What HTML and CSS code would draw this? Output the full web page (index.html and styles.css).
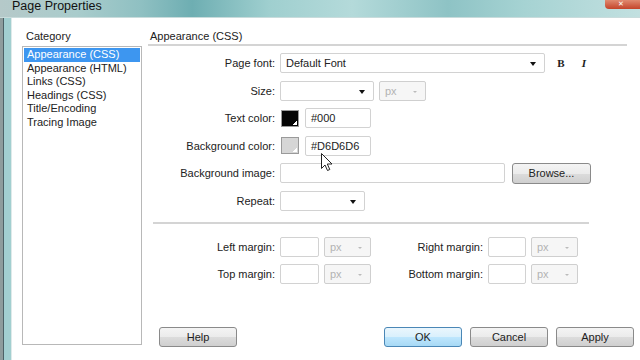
FILE: index.html
```html
<!DOCTYPE html>
<html lang="en">
<head>
    <meta charset="UTF-8">
    <title>Page Properties</title>
    <link rel="stylesheet" href="styles.css">
</head>
<body>

<div class="window">
    <div class="titlebar">
        <span class="title">Page Properties</span>
        <span class="close">&#x2715;</span>
    </div>

    <div class="frame">
        <div class="frame-left"></div>

        <div class="client">
            <!-- lista de categorias -->
            <div class="sidebar">
                <div class="caption">Category</div>
                <ul class="listbox">
                    <li class="selected">Appearance (CSS)</li>
                    <li>Appearance (HTML)</li>
                    <li>Links (CSS)</li>
                    <li>Headings (CSS)</li>
                    <li>Title/Encoding</li>
                    <li>Tracing Image</li>
                </ul>
            </div>

            <!-- panel derecho -->
            <div class="main">
                <div class="panel-title">Appearance (CSS)</div>

                <div class="form">
                    <div class="row">
                        <span class="label">Page font:</span>
                        <div class="select font-select">Default Font</div>
                        <span class="style-btn bold">B</span>
                        <span class="style-btn italic">I</span>
                    </div>
                    <div class="row">
                        <span class="label">Size:</span>
                        <div class="select size-select"></div>
                        <div class="select unit disabled">px</div>
                    </div>
                    <div class="row">
                        <span class="label">Text color:</span>
                        <span class="swatch swatch-black"></span>
                        <div class="field color-field">#000</div>
                    </div>
                    <div class="row">
                        <span class="label">Background color:</span>
                        <span class="swatch swatch-grey"></span>
                        <div class="field color-field">#D6D6D6</div>
                    </div>
                    <div class="row">
                        <span class="label">Background image:</span>
                        <div class="field image-field"></div>
                        <button class="btn browse">Browse...</button>
                    </div>
                    <div class="row">
                        <span class="label">Repeat:</span>
                        <div class="select repeat-select"></div>
                    </div>
                </div>

                <div class="separator"></div>

                <div class="margins">
                    <span class="label">Left margin:</span>
                    <div class="field"></div>
                    <div class="select unit disabled">px</div>
                    <span class="label">Right margin:</span>
                    <div class="field"></div>
                    <div class="select unit disabled">px</div>

                    <span class="label">Top margin:</span>
                    <div class="field"></div>
                    <div class="select unit disabled">px</div>
                    <span class="label">Bottom margin:</span>
                    <div class="field"></div>
                    <div class="select unit disabled">px</div>
                </div>

                <div class="buttons">
                    <button class="btn help">Help</button>
                    <button class="btn ok">OK</button>
                    <button class="btn">Cancel</button>
                    <button class="btn">Apply</button>
                </div>
            </div>
        </div>
    </div>
</div>

<svg class="cursor" width="12" height="19" viewBox="0 0 12 19">
    <path d="M0.5 0.5 L0.5 15.5 L4 12 L6.5 17.5 L8.8 16.5 L6.3 11 L11 11 Z" fill="#fff" stroke="#222" stroke-width="1"/>
</svg>

</body>
</html>
```

FILE: styles.css
```css
/* Estilos generales */
body {
    margin: 0;
    width: 640px;
    height: 360px;
    overflow: hidden;
    background-color: #fff;
    font-family: 'Liberation Sans', Arial, sans-serif;
    font-size: 11px;
    color: #222;
    position: relative;
}
.window {
    width: 640px;
    display: flex;
    flex-direction: column;
}
/* Barra de titulo */
.titlebar {
    height: 17px;
    border-bottom: 1px solid #c9dcdc;
    background: linear-gradient(90deg, #b5c9c9 0%, #a9cccc 12%, #8fc0c2 22%, #6eaeb2 30%, #9fcfcf 42%, #b4dada 55%, #8ec3c5 70%, #a6d3d3 82%, #c2e0e0 100%);
    display: flex;
    position: relative;
}
.title {
    display: block;
    margin-left: 12px;
    margin-top: 0;
    line-height: 12px;
    font-size: 12.5px;
    color: #111;
}
.close {
    position: absolute;
    left: 605px;
    top: 0;
    width: 35px;
    height: 9px;
    border-radius: 0 0 0 4px;
    background: linear-gradient(#e08a70, #c4442a);
    color: #fff;
    font-size: 7px;
    line-height: 8px;
    text-align: center;
    text-indent: -4px;
}
.frame {
    display: flex;
    height: 342px;
}
.frame-left {
    width: 12px;
    flex-shrink: 0;
    background: linear-gradient(90deg, #8e9c9c 0 3px, #4d6266 3px 4px, #a2cfd0 4px 11px, #dfeaea 11px 12px);
}
.client {
    flex: 1;
    display: flex;
    gap: 6px;
    padding-left: 10px;
}
/* Lista de categorias */
.sidebar {
    width: 120px;
    flex-shrink: 0;
}
.caption, .panel-title {
    padding-top: 11px;
    line-height: 14px;
    padding-left: 4px;
}
.listbox {
    list-style: none;
    margin: 3px 0 0 0;
    padding: 1px;
    height: 295px;
    border: 1px solid #b8b8b8;
}
.listbox li {
    line-height: 13.6px;
    padding-left: 3px;
}
.listbox .selected {
    background-color: #3d96f0;
    color: #fff;
}
/* Panel derecho */
.main {
    flex: 1;
}
.panel-title {
    padding-left: 2px;
    width: 477px;
    padding-bottom: 1px;
    border-bottom: 2px solid #d4d4d4;
}
.form {
    margin-top: 7px;
    display: flex;
    flex-direction: column;
    gap: 7.5px;
}
.row {
    display: flex;
    align-items: center;
    gap: 5px;
    height: 20px;
}
.label {
    width: 127px;
    text-align: right;
    flex-shrink: 0;
}
.select, .field {
    box-sizing: border-box;
    height: 20px;
    border: 1px solid #d2d2d2;
    border-radius: 2px;
    background-color: #fff;
    line-height: 18px;
    padding-left: 5px;
    position: relative;
}
.select::after {
    content: '';
    position: absolute;
    right: 8px;
    top: 8px;
    border-left: 3px solid transparent;
    border-right: 3px solid transparent;
    border-top: 4px solid #111;
}
.select.disabled {
    background-color: #f6f6f6;
    border-color: #cfcfcf;
    color: #b3b3b3;
}
.select.disabled::after {
    border-top-color: #bbb;
    border-left-width: 2px;
    border-right-width: 2px;
    border-top-width: 2px;
    top: 9px;
}
.font-select { width: 265px; }
.size-select { width: 94px; }
.unit { width: 47px; }
.repeat-select { width: 85px; }
.style-btn {
    font-family: 'Liberation Serif', serif;
    font-weight: bold;
    font-size: 11px;
    width: 18px;
    text-align: center;
}
.bold { margin-left: 2px; }
.italic { font-style: italic; margin-left: 0; }
.swatch {
    box-sizing: border-box;
    width: 18px;
    height: 17px;
    margin-left: 1px;
    border: 1px solid #9a9a9a;
    position: relative;
}
.swatch::after {
    content: '';
    position: absolute;
    right: 1px;
    bottom: 1px;
    width: 4px;
    height: 4px;
    background: linear-gradient(135deg, transparent 50%, #fff 50%);
}
.swatch-black { background-color: #050505; }
.swatch-grey { background-color: #d6d6d6; }
.color-field {
    width: 66px;
    margin-left: 1px;
}
.image-field { width: 225px; }
/* Botones */
.btn {
    box-sizing: border-box;
    height: 20px;
    width: 78px;
    padding: 0;
    font-family: inherit;
    font-size: 11px;
    color: #222;
    border: 1px solid #8a8a8a;
    border-radius: 3px;
    background: linear-gradient(#f4f4f4 0%, #ebebeb 50%, #dcdcdc 51%, #cfcfcf 100%);
}
.browse {
    width: 79px;
    height: 21px;
    margin-left: 2px;
}
.ok {
    border-color: #4a87b6;
    background: linear-gradient(#eaf6fd 0%, #d9f0fc 50%, #bee6fd 51%, #a7d9f5 100%);
}
.separator {
    margin: 11px 0 0 5px;
    width: 436px;
    border-top: 2px solid #d4d4d4;
}
.margins {
    margin-top: 13px;
    display: grid;
    grid-template-columns: 127px 39px 47px 107px 38px 45px;
    grid-auto-rows: 20px;
    column-gap: 5px;
    row-gap: 7px;
    align-items: center;
}
.margins .label {
    width: auto;
}
.buttons {
    margin-top: 43px;
    display: flex;
    gap: 8px;
    padding-left: 11px;
}
.help { margin-right: 139px; }
/* Puntero */
.cursor {
    position: absolute;
    left: 321px;
    top: 153px;
}
```
